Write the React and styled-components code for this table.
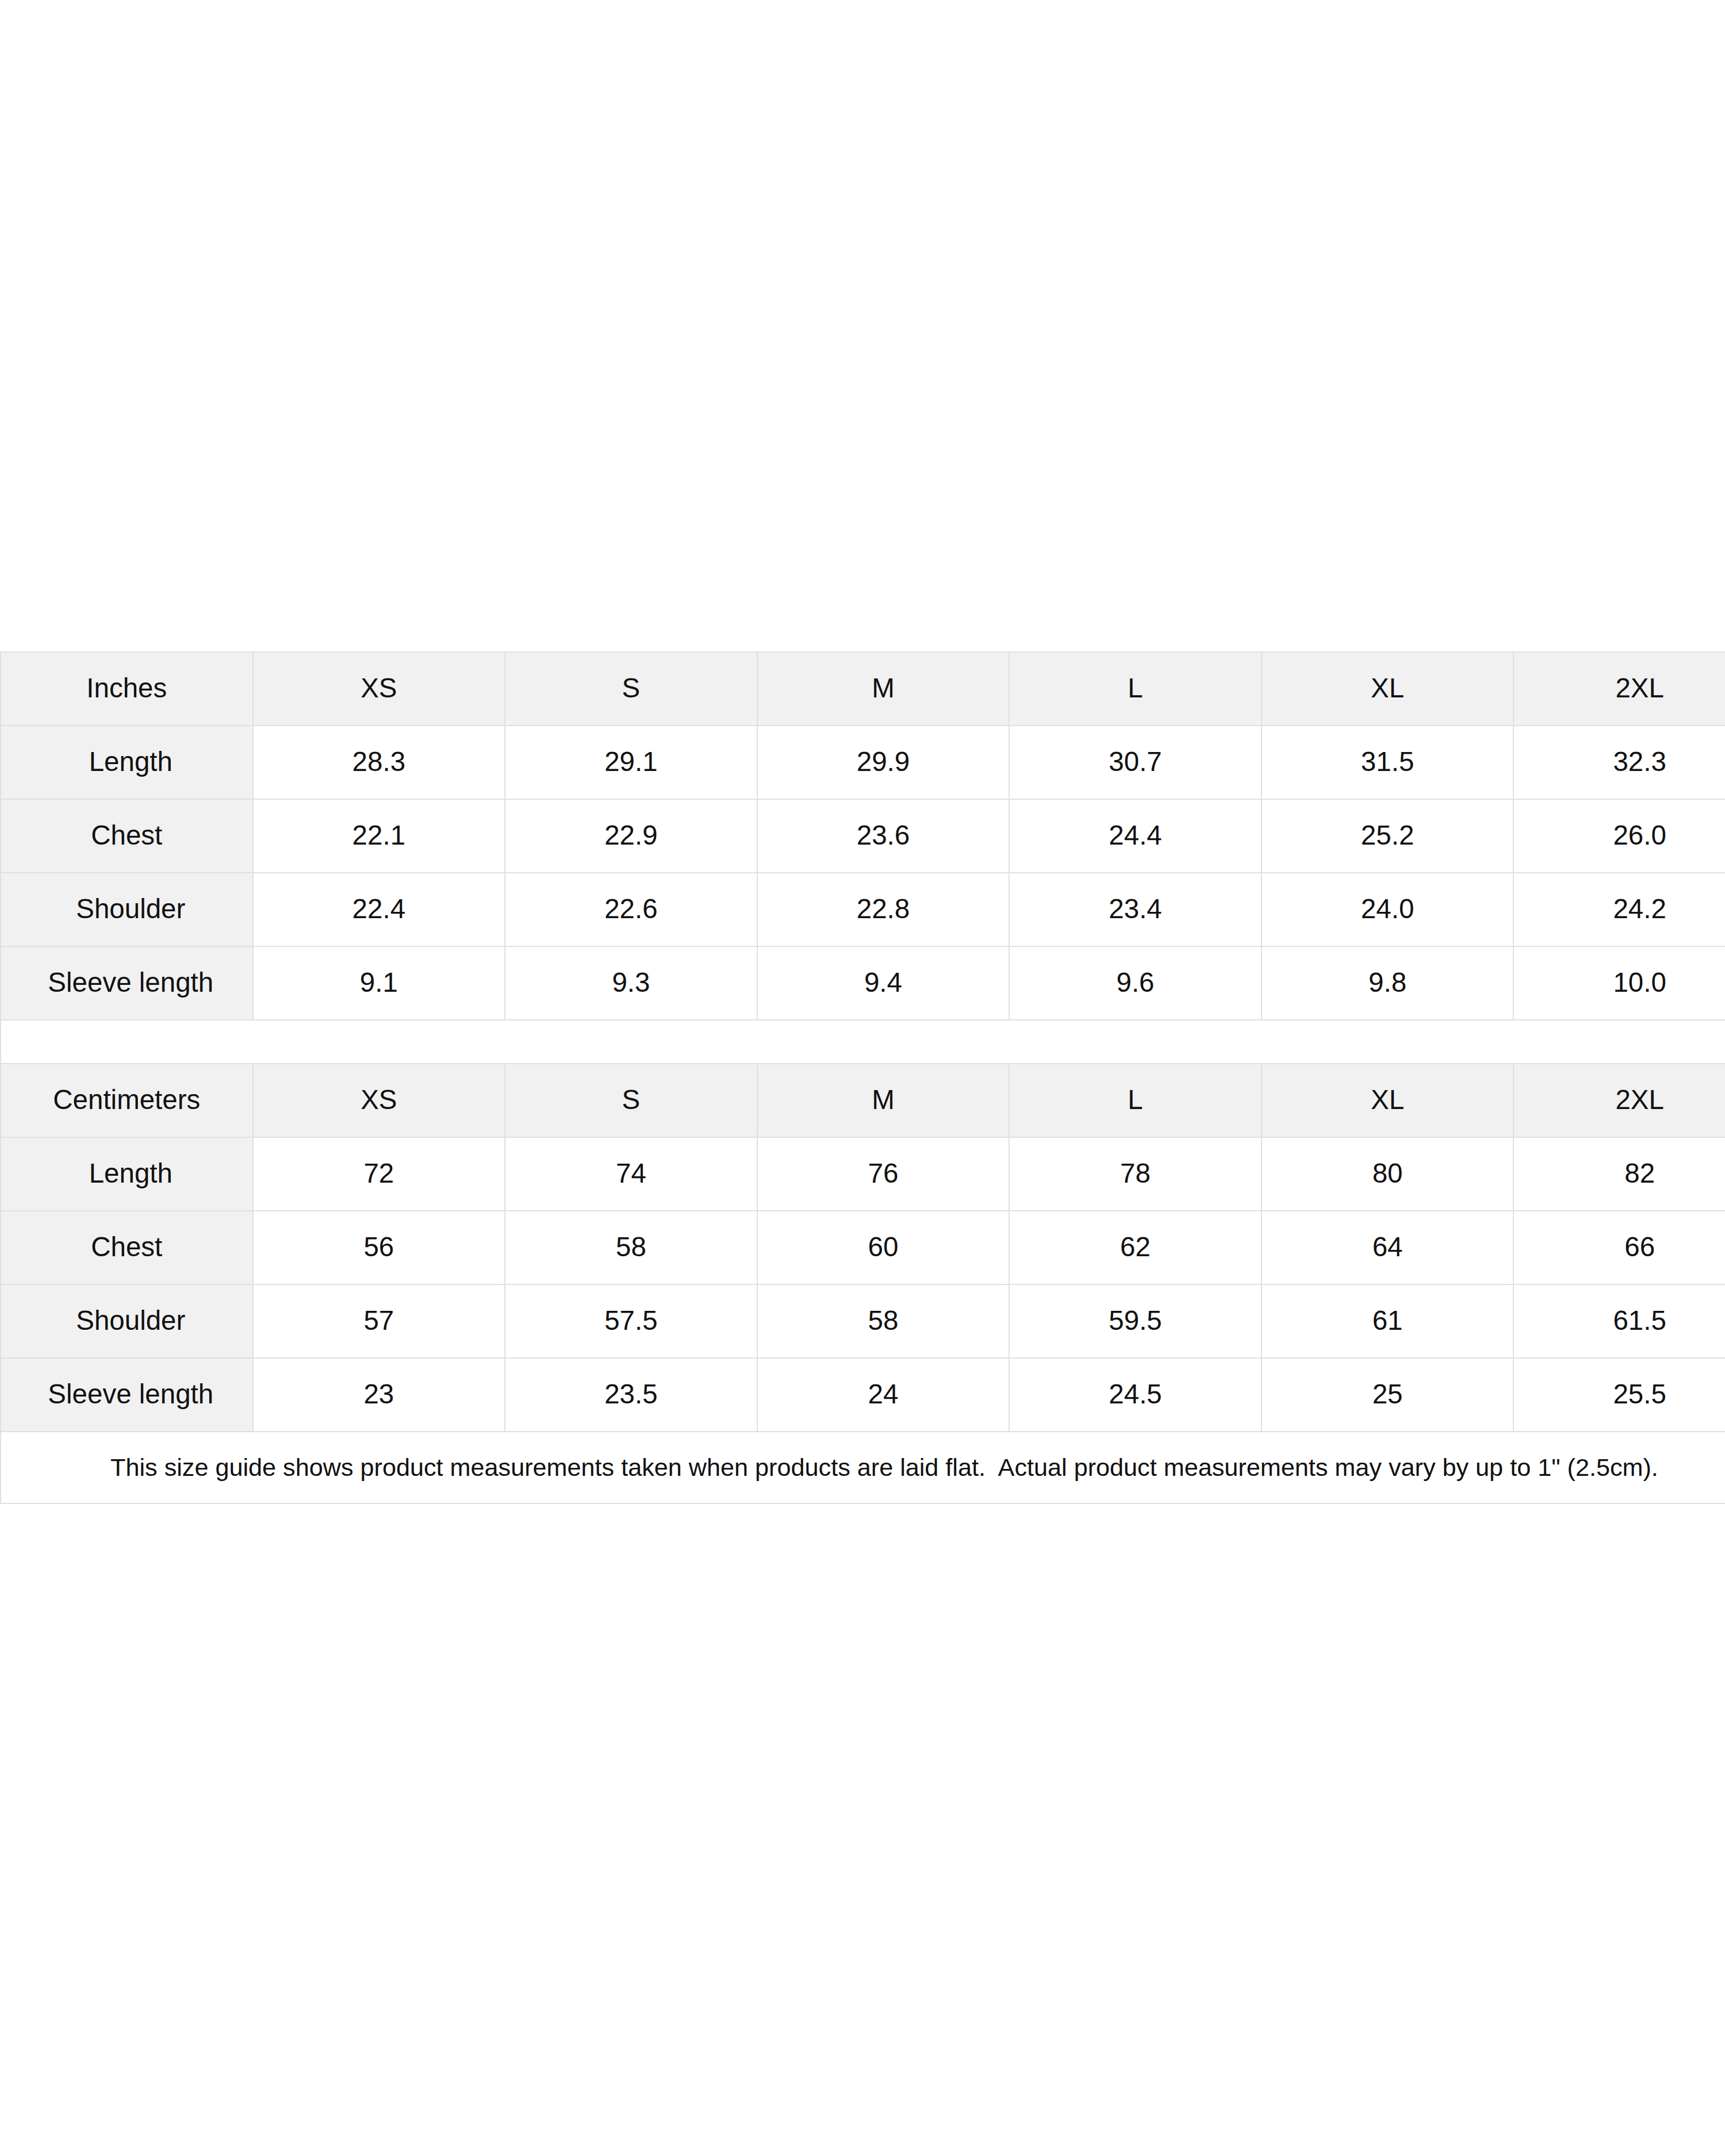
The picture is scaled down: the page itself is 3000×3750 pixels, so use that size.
import React from "react";
import styled, { createGlobalStyle } from "styled-components";

const Global = createGlobalStyle`
  html, body {
    margin: 0;
    padding: 0;
    background: #ffffff;
    overflow: hidden;
  }
  body {
    font-family: "Liberation Sans", Arial, Helvetica, sans-serif;
    color: #111;
  }
`;

const Page = styled.div`
  width: 3000px;
  height: 3750px;
  display: flex;
  align-items: center;
  overflow: hidden;
`;

const Table = styled.table`
  width: 3070px;
  flex: 0 0 3070px;
  table-layout: fixed;
  border-collapse: collapse;
  border: 2px solid #e0e0e0;
  font-family: "Liberation Sans", Arial, Helvetica, sans-serif;
  margin-top: -2px;
`;

const Row = styled.tr`
  height: ${(p) => p.$h || 128}px;
  background: ${(p) => (p.$head ? "#f1f1f1" : "#ffffff")};
`;

const Cell = styled.td`
  border: 2px solid #e0e0e0;
  text-align: center;
  vertical-align: middle;
  padding: 0 0 3px ${(p) => (p.$indent ? 14 : 0)}px;
  font-size: 47.5px;
  color: #111;
  background: ${(p) => (p.$shade ? "#f1f1f1" : "transparent")};
`;

const Spacer = styled.td`
  border: 2px solid #e0e0e0;
  padding: 0;
  background: #ffffff;
`;

const Note = styled.td`
  border: 2px solid #e0e0e0;
  text-align: center;
  vertical-align: middle;
  padding: 0 0 0 4px;
  font-size: 43.2px;
  color: #111;
  white-space: pre;
  background: #ffffff;
`;

const sizes = ["XS", "S", "M", "L", "XL", "2XL"];

const inches = [
  ["Length", "28.3", "29.1", "29.9", "30.7", "31.5", "32.3"],
  ["Chest", "22.1", "22.9", "23.6", "24.4", "25.2", "26.0"],
  ["Shoulder", "22.4", "22.6", "22.8", "23.4", "24.0", "24.2"],
  ["Sleeve length", "9.1", "9.3", "9.4", "9.6", "9.8", "10.0"],
];

const cms = [
  ["Length", "72", "74", "76", "78", "80", "82"],
  ["Chest", "56", "58", "60", "62", "64", "66"],
  ["Shoulder", "57", "57.5", "58", "59.5", "61", "61.5"],
  ["Sleeve length", "23", "23.5", "24", "24.5", "25", "25.5"],
];

function Section({ unit, rows }) {
  return (
    <>
      <Row $head>
        <Cell>{unit}</Cell>
        {sizes.map((s) => (
          <Cell key={s}>{s}</Cell>
        ))}
      </Row>
      {rows.map((r) => (
        <Row key={r[0]}>
          <Cell $shade $indent={r[0] !== "Chest"}>
            {r[0]}
          </Cell>
          {r.slice(1).map((v, i) => (
            <Cell key={i}>{v}</Cell>
          ))}
        </Row>
      ))}
    </>
  );
}

export default function App() {
  return (
    <>
      <Global />
      <Page>
        <Table>
          <colgroup>
            {Array.from({ length: 7 }).map((_, i) => (
              <col key={i} style={{ width: `${3070 / 7}px` }} />
            ))}
          </colgroup>
          <tbody>
            <Section unit="Inches" rows={inches} />
            <Row $h={76}>
              <Spacer colSpan={7} />
            </Row>
            <Section unit="Centimeters" rows={cms} />
            <Row $h={125}>
              <Note colSpan={7}>
                {"This size guide shows product measurements taken when products are laid flat.  Actual product measurements may vary by up to 1\" (2.5cm)."}
              </Note>
            </Row>
          </tbody>
        </Table>
      </Page>
    </>
  );
}
